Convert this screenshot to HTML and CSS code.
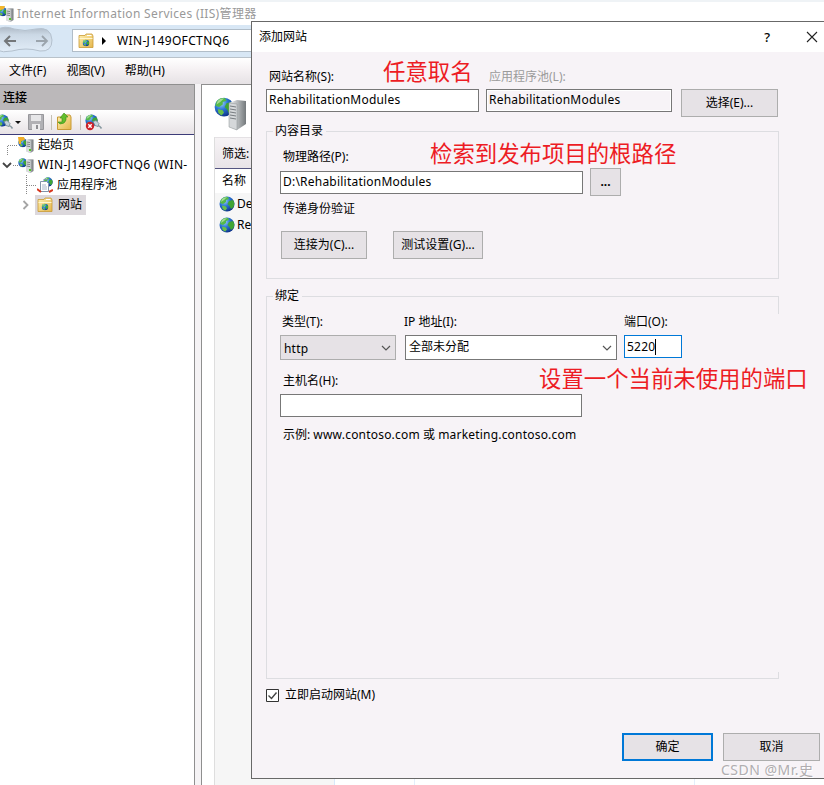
FILE: index.html
```html
<!DOCTYPE html>
<html lang="zh-CN">
<head>
<meta charset="utf-8">
<title>IIS</title>
<link rel="stylesheet" href="styles.css">
</head>
<body>
<svg class="defs" width="0" height="0">
  <defs>
    <radialGradient id="sea" cx=".35" cy=".3" r=".75"><stop offset="0" stop-color="#9fd0fa"/><stop offset=".45" stop-color="#2c78d6"/><stop offset="1" stop-color="#0b2f86"/></radialGradient>
    <linearGradient id="steel" x1="0" x2="1"><stop offset="0" stop-color="#f4f4f4"/><stop offset=".5" stop-color="#b4b8ba"/><stop offset="1" stop-color="#74797c"/></linearGradient>
    <linearGradient id="gold" x1="0" y1="0" x2="1" y2="1"><stop offset="0" stop-color="#fff0b0"/><stop offset="1" stop-color="#e5b64c"/></linearGradient>
    <symbol id="globe" viewBox="0 0 16 16">
      <circle cx="8" cy="8" r="7.5" fill="url(#sea)"/>
      <path d="M2 3.500Q5 0 9 1L10 3 7 4 7 6 4 8 1 7Z" fill="#54b948"/>
      <path d="M10 5l4-1 1.400 3-.8 4-2.600 2-1.500-3-2-2Z" fill="#3fa535"/>
      <path d="M3 9.500l4 1 1 2-2 2.300-2.500-2Z" fill="#68bf4b"/>
      <path d="M3 3Q5 1 8 1.200L5 4 2 6Z" fill="#d9f2c6" opacity=".6"/>
    </symbol>
    <symbol id="server" viewBox="0 0 16 16">
      <use href="#globe" x="0" y="1" width="9.500" height="9.500"/>
      <path d="M8 3l2-1 5.500.5V14l-3 2L8 14.500Z" fill="url(#steel)"/>
      <path d="M8 3.200l4.500.6V16L8 14.500Z" fill="#d9dcdd"/>
      <path d="M8.500 5l3.500.5M8.500 7l3.500.5M8.500 9l3.500.5" stroke="#74797c" stroke-width=".9"/>
      <rect x="11" y="12" width="2" height="2" fill="#50c820"/>
    </symbol>
    <symbol id="folder" viewBox="0 0 16 16">
      <path d="M1 14.500V2.500h6l1-1.500h6l1 2v11.500Z" fill="url(#gold)" stroke="#c99a35" stroke-width=".8"/>
      <path d="M9 2.500h4.500" stroke="#fff" stroke-width="1"/>
      <path d="M1.500 5.500h13" stroke="#fff6cf"/>
      <use href="#globe" x="4.500" y="6.500" width="7" height="7"/>
    </symbol>
    <symbol id="connect" viewBox="0 0 18 18">
      <use href="#globe" x="0" y="1" width="13" height="13"/>
      <path d="M8 8.500l3-1 3 3-1 3-3-1Z" fill="#c4d4dc" stroke="#718590" stroke-width=".8"/>
      <path d="M13 12.500q2 .5 3.500 3" fill="none" stroke="#8899a0" stroke-width="1.600"/>
    </symbol>
  </defs>
</svg>

<div class="app">
  <header class="titlebar">
    <svg class="i14" viewBox="2 0 14 16"><use href="#server" width="16" height="16"/><path d="M2 0h5l-1 3-4 1Z" fill="#f2b62e"/></svg>
    <span class="apptitle">Internet Information Services (IIS)管理器</span>
  </header>
  <div class="address">
    <svg class="nav" viewBox="0 0 54 32">
      <defs><linearGradient id="pill" x1="0" y1="0" x2="0" y2="1"><stop offset="0" stop-color="#aeb9c5"/><stop offset=".3" stop-color="#cbd8e5"/><stop offset="1" stop-color="#e2edf8"/></linearGradient></defs>
      <path d="M-4 5Q5 0 14 4Q25 7 36 4Q51 1 52 15Q52 27 40 26Q26 22 12 26Q3 28-4 25Z" fill="url(#pill)" stroke="#b4c1ce"/>
      <path d="M16 16H5m5-5-5 5 5 5" fill="none" stroke="#74777a" stroke-width="2"/>
      <path d="M36 16h11m-5-5 5 5-5 5" fill="none" stroke="#9ba4ac" stroke-width="1.800"/>
    </svg>
    <div class="crumbs">
      <svg class="i16" viewBox="0 0 16 16"><use href="#folder"/></svg>
      <i class="tri"></i><span class="host">WIN-J149OFCTNQ6</span><i class="tri"></i>
    </div>
  </div>
  <nav class="menu"><span>文件(F)</span><span>视图(V)</span><span>帮助(H)</span></nav>
  <main class="panes">
    <section class="tree-pane">
      <h2>连接</h2>
      <div class="tools">
        <svg viewBox="0 0 110 24">
          <use href="#connect" x="-4" y="3" width="18" height="18"/>
          <path d="M15 11h6l-3 3Z" fill="#111"/>
          <path d="M28.500 4.500h15v15h-15Z" fill="#b1b1b5" stroke="#97979b"/><path d="M31 5h10v6H31Z" fill="#e6e6e8"/><path d="M32 14h8v6h-8Z" fill="#ececee"/><path d="M36 15h2v4h-2Z" fill="#8e8e92"/>
          <path d="M51.500 5v15M80.500 5v15" stroke="#c5c0b4"/>
          <path d="M57.500 19.500V7H63l1-2h6l1 2v12.500Z" fill="url(#gold)" stroke="#c99a35"/><path d="M58 12h4V8h-2l4-5 4 4h-2v3q-1 4-6 4Z" fill="#62bd2c" stroke="#398b1a" stroke-width=".6"/>
          <use href="#connect" x="85" y="3" width="18" height="18"/>
          <circle cx="90" cy="16" r="4.200" fill="#cc2027"/><path d="M88.300 14.300l3.400 3.400m0-3.400-3.400 3.400" stroke="#fff" stroke-width="1.400"/>
        </svg>
      </div>
      <ul class="tree">
        <li><svg class="stem" viewBox="0 0 18 20"><path d="M7.500 20v-9.500H18" class="dots"/></svg><svg class="i16" viewBox="0 0 16 16"><use href="#server"/><path d="M0 0h6l1 3-4 1v3H1Z" fill="#f0ae28"/></svg><span>起始页</span></li>
        <li><svg class="stem" viewBox="0 0 18 20"><path d="M3 8l4 4 4-4" fill="none" stroke="#444" stroke-width="1.800"/><path d="M13 10.500h5" class="dots"/></svg><svg class="i16" viewBox="0 0 16 16"><use href="#server"/></svg><span class="wide">WIN-J149OFCTNQ6 (WIN-</span></li>
        <li><svg class="stem deep" viewBox="0 0 37 20"><path d="M26.500 0v20M27 10.500h10" class="dots"/></svg><svg class="i16" viewBox="0 0 16 16"><use href="#globe" x="6" y="0" width="10" height="10"/><path d="M3.500 4.500h6l2 2v8h-8Z" fill="#fff" stroke="#8195aa"/><path d="M6.500 2.500h4" stroke="#8195aa"/><path d="M5 8h4M5 10h5M5 12h5" stroke="#a6b6ca"/><path d="M0 12l4 3M12 15l4-2" stroke="#d8361e" stroke-width="2"/></svg><span>应用程序池</span></li>
        <li><svg class="stem mid" viewBox="0 0 35 20"><path d="M23.500 6l4 4-4 4" fill="none" stroke="#a5a5a5" stroke-width="1.800"/></svg><div class="selected"><svg class="i16" viewBox="0 0 16 16"><use href="#folder"/></svg><span>网站</span></div></li>
      </ul>
    </section>
    <section class="content-pane">
      <svg class="big" viewBox="0 0 33 34"><use href="#globe" width="20" height="20"/><path d="M15 6l8-3 9 1v23l-9 6-8-3Z" fill="url(#steel)"/><path d="M15 6l8 1v26l-8-3Z" fill="#d5d8da" stroke="#8a9093" stroke-width=".5"/><path d="M16 9l6 1m-6 2 6 1m-6 2 6 1m-6 2 6 1m-6 2 6 1" stroke="#777c80"/></svg>
      <div class="list">
        <div class="filter">筛选:</div>
        <div class="colhead">名称</div>
        <div class="site"><svg class="i16" viewBox="0 0 16 16"><use href="#globe"/></svg>De</div>
        <div class="site"><svg class="i16" viewBox="0 0 16 16"><use href="#globe"/></svg>Re</div>
        <div class="listfoot"></div>
      </div>
    </section>
  </main>
</div>

<div class="dialog">
  <div class="dtitle"><span>添加网站</span><b>?</b><svg class="close" viewBox="0 0 12 12"><path d="M1 1l10 10M11 1L1 11" stroke="#222" stroke-width="1.100"/></svg></div>
  <div class="dbody">
    <div class="top">
      <label class="f-name">网站名称(S):<span class="field">RehabilitationModules</span></label>
      <label class="f-pool"><em>应用程序池(L):</em><span class="field ro">RehabilitationModules</span></label>
      <span class="btn b97">选择(E)...</span>
    </div>
    <div class="group g1">
      <span class="legend">内容目录</span>
      <div class="lab l-path">物理路径(P):</div>
      <div class="row"><span class="field w303">D:\RehabilitationModules</span><span class="btn dots3">...</span></div>
      <div class="lab l-auth">传递身份验证</div>
      <div class="row actions"><span class="btn b86">连接为(C)...</span><span class="btn b90">测试设置(G)...</span></div>
    </div>
    <div class="group g2">
      <span class="legend">绑定</span>
      <div class="binds">
        <label class="k-type">类型(T):<span class="select gray"><span class="http">http</span><svg viewBox="0 0 10 6"><path d="M1 1l4 4 4-4"/></svg></span></label>
        <label class="k-ip">IP 地址(I):<span class="select">全部未分配<svg viewBox="0 0 10 6"><path d="M1 1l4 4 4-4"/></svg></span></label>
        <label class="k-port">端口(O):<span class="field focus">5220<i class="caret"></i></span></label>
      </div>
      <div class="lab l-host">主机名(H):</div>
      <span class="field w302"></span>
      <div class="lab l-ex">示例: <span class="ex">www.contoso.com</span> 或 <span class="ex">marketing.contoso.com</span></div>
      <i class="edge"></i>
    </div>
    <div class="start"><svg viewBox="0 0 13 13"><path d="M.5.5h12v12H.5Z" fill="#fff" stroke="#333"/><path d="M2.500 6.500l3 3 5-6" fill="none" stroke="#444" stroke-width="1.400"/></svg>立即启动网站(M)</div>
    <div class="foot"><span class="btn ok">确定</span><span class="btn b97">取消</span></div>
  </div>
</div>
<div class="note n1">任意取名</div>
<div class="note n2">检索到发布项目的根路径</div>
<div class="note n3">设置一个当前未使用的端口</div>
<div class="mark">CSDN @Mr.史</div>
</body>
</html>
```
FILE: styles.css
```css
* { box-sizing: border-box; }
body {
  margin: 0; width: 824px; height: 785px; overflow: hidden; position: relative;
  font: 12px/16px "Noto Sans", "Noto Sans CJK SC", sans-serif; color: #000; background: #fff;
}
svg { display: block; flex: none; }
.defs { position: absolute; }
.i16 { width: 16px; height: 16px; }
.i14 { width: 14px; height: 16px; }
.app { height: 785px; display: flex; flex-direction: column; }
.titlebar { height: 25px; border-top: 2px solid #eff3f6; display: flex; align-items: center; flex: none; }
.apptitle { color: #999; margin-left: 3px; white-space: nowrap; letter-spacing: .33px; }
.address { height: 33px; flex: none; background: #d8e7f5; border-bottom: 1px solid #b9c2ca; display: flex; align-items: flex-start; }
.nav { width: 54px; height: 32px; }
.crumbs { margin: 4px 0 0 18px; width: 260px; height: 23px; border: 1px solid #b1bdc8; background: #fff; display: flex; align-items: center; padding-left: 5px; }
.tri { border: 4px solid transparent; border-left: 4px solid #000; border-right: 0; margin-left: 8px; }
.host { margin: 0 12px 0 11px; width: 116px; white-space: nowrap; letter-spacing: .35px; }
.menu { height: 26px; flex: none; display: flex; gap: 20px; padding: 5px 0 0 9px; background: linear-gradient(#fff, #f5f1f3 45%, #e6e2e5); }
.panes { flex: 1; display: flex; background: #f5f3f5; }
.tree-pane { width: 195px; border: 1px solid #8f8f8f; border-width: 1px 1px 0 0; background: #fff; }
h2 { margin: 0; height: 25px; padding: 5px 3px; background: #bbb8ba; font: inherit; font-weight: 500; }
.tools { height: 25px; background: linear-gradient(#fff, #e7e2e5); border-bottom: 1px solid #3c3c78; }
.tools svg { width: 110px; height: 24px; }
.tree { list-style: none; margin: 0; padding: 0; }
.tree li { height: 20px; display: flex; align-items: center; white-space: nowrap; }
.tree li > span { margin-left: 4px; }
.tree li > .wide { letter-spacing: .35px; }
.stem { width: 18px; height: 20px; }
.deep { width: 37px; }
.mid { width: 35px; }
.dots { fill: none; stroke: #888; stroke-dasharray: 1 1; }
.selected { height: 20px; width: 51px; display: flex; align-items: center; background: #dcd8dc; padding-left: 2px; gap: 5px; }
.content-pane { margin-left: 6px; flex: 1; border: 1px solid #8f8f8f; border-right: 0; border-bottom: 0; background: #fff; padding: 12px 0 0 12px; display: flex; flex-direction: column; }
.big { width: 33px; height: 34px; }
.list { flex: 1; margin-top: 6px; border-left: 1px solid #dedede; background: linear-gradient(90deg, #f6f6f6 119px, #d8e9fa 119px 120px, #fff 120px 199px, #e3effb 199px 200px, #fff 200px 479px, #e3effb 479px 480px, #fff 480px); }
.filter { height: 32px; padding: 8px 7px; border-top: 1px solid #e4e1e4; border-bottom: 1px solid #555581; background: linear-gradient(#f6f3f5, #e9e4e8); }
.colhead { height: 24px; padding: 4px 7px; background: #fff; }
.site { height: 21px; display: flex; align-items: center; gap: 2px; padding-left: 4px; }

.dialog { position: absolute; left: 251px; top: 21px; width: 573px; height: 758px; border: 1px solid #686868; border-right: 0; background: #f7f3f7; }
.dtitle { height: 30px; background: #fff; display: flex; align-items: center; padding: 0 6px 0 7px; }
.dtitle b { margin-left: auto; font-size: 13px; font-weight: 500; }
.close { width: 12px; height: 12px; margin-left: 36px; }
.dbody { padding: 17px 0 0 14px; white-space: nowrap; }
.top { display: flex; height: 62px; align-items: flex-start; }
.top .btn { margin-top: 20px; }
.top label { padding-left: 3px; }
.top .field { margin: 4px 0 0 -3px; }
em { font-style: normal; color: #9b9b9b; }
.f-name { width: 220px; }
.f-name .field { width: 213px; }
.f-pool { width: 195px; }
.f-pool .field { width: 186px; }
.field { display: block; height: 23px; line-height: 20px; padding-left: 2px; border: 1px solid #777; background: #fff; letter-spacing: .22px; }
.ro { background: #f7f3f7; box-shadow: inset 0 0 0 1px #fff; }
.btn { display: flex; align-items: center; justify-content: center; height: 28px; border: 1px solid #adadad; background: #e6e2e6; }
.b97 { width: 97px; }
.b86 { width: 86px; }
.b90 { width: 90px; }
.group { width: 513px; border: 1px solid #dddde1; padding-left: 13px; position: relative; }
.legend { position: absolute; left: 6px; top: -9px; padding: 0 3px 0 2px; background: #f7f3f7; }
.g1 { height: 148px; }
.lab { padding-left: 3px; }
.l-path { margin: 17px 0 3px; }
.row { display: flex; align-items: center; }
.w303 { width: 303px; }
.w302 { width: 302px; }
.dots3 { width: 31px; margin-left: 7px; font-weight: 700; }
.l-auth { margin-top: 5px; }
.actions { margin: 14px 0 0 1px; gap: 26px; }
.g2 { height: 383px; margin-top: 17px; border-right-color: transparent; }
.g2::after { content: ""; position: absolute; right: -1px; top: -1px; width: 1px; height: 18px; background: #dddde1; }
.edge { position: absolute; right: -1px; bottom: -1px; width: 1px; height: 7px; background: #dddde1; }
.binds { display: flex; padding-top: 17px; height: 63px; }
.binds .field, .binds .select { margin-top: 5px; }
.k-type { width: 125px; text-indent: 2px; }
.k-type .select { width: 116px; }
.k-ip { width: 219px; text-indent: -1px; }
.k-ip .select { width: 212px; }
.k-port .field { width: 58px; }
.select { display: flex; height: 25px; line-height: 22px; border: 1px solid #777; background: #fff; padding: 0 4px 0 3px; text-indent: 0; justify-content: space-between; }
.select svg { width: 10px; height: 6px; margin-top: 9px; }
.select path { fill: none; stroke: #555; stroke-width: 1.2; }
.gray { border-color: #adadad; background: #e6e2e6; }
.http { padding-top: 2px; letter-spacing: .2px; }
.focus { display: flex; align-items: center; border-color: #0078d7; }
.caret { width: 1px; height: 16px; background: #000; }
.l-host { margin: 13px 0 5px; }
.l-ex { margin-top: 10px; }
.ex { letter-spacing: .2px; }
.start { display: flex; align-items: center; gap: 6px; margin-top: 8px; }
.start svg { width: 13px; height: 13px; }
.foot { display: flex; margin: 30px 0 0 356px; gap: 10px; }
.ok { width: 91px; border: 2px solid #0078d7; }
.note { position: absolute; color: #ed1c24; font: 22.4px/32px "Noto Sans CJK SC", sans-serif; white-space: nowrap; }
.n1 { left: 383px; top: 54px; }
.n2 { left: 430px; top: 136px; }
.n3 { left: 539px; top: 361px; }
.mark { position: absolute; left: 721px; top: 760px; font-size: 14px; line-height: 20px; color: #b0adb0; letter-spacing: .5px; white-space: nowrap; text-shadow: 1px 1px #fff; }
```
